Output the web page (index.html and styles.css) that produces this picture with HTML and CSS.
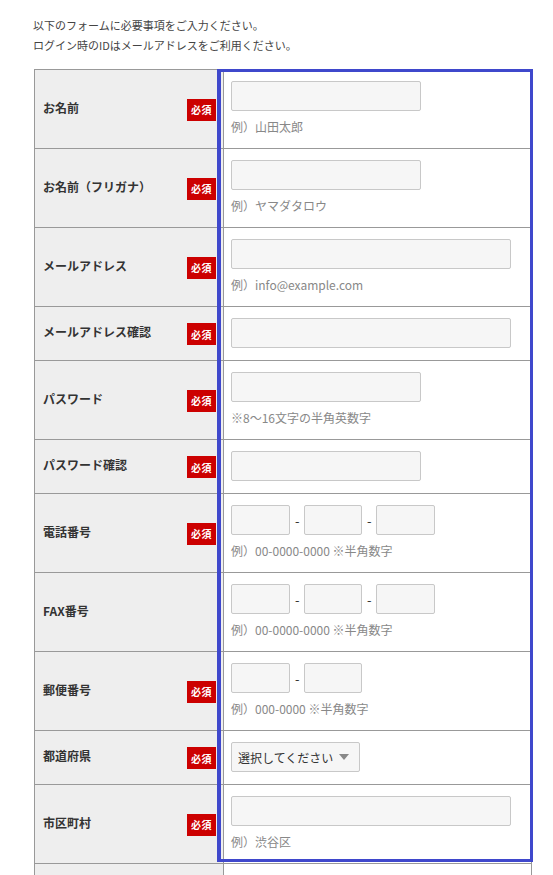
FILE: index.html
```html
<!DOCTYPE html>
<html lang="ja">
<head>
<meta charset="utf-8">
<title>会員登録フォーム</title>
<link rel="stylesheet" href="styles.css">
</head>
<body>
<div class="page">
  <p class="intro">以下のフォームに必要事項をご入力ください。<br>ログイン時のIDはメールアドレスをご利用ください。</p>
  <div class="form-wrap">
    <table class="form-table">
      <colgroup><col class="col-label"><col class="col-field"></colgroup>
      <tbody>
        <tr>
          <th><div class="label"><span class="label-text">お名前</span><span class="req">必須</span></div></th>
          <td><input class="inp w-m" type="text"><p class="note">例）山田太郎</p></td>
        </tr>
        <tr>
          <th><div class="label"><span class="label-text">お名前（フリガナ）</span><span class="req">必須</span></div></th>
          <td><input class="inp w-m" type="text"><p class="note">例）ヤマダタロウ</p></td>
        </tr>
        <tr>
          <th><div class="label"><span class="label-text">メールアドレス</span><span class="req">必須</span></div></th>
          <td><input class="inp w-l" type="text"><p class="note">例）info@example.com</p></td>
        </tr>
        <tr>
          <th><div class="label"><span class="label-text">メールアドレス確認</span><span class="req">必須</span></div></th>
          <td><input class="inp w-l" type="text"></td>
        </tr>
        <tr>
          <th><div class="label"><span class="label-text">パスワード</span><span class="req">必須</span></div></th>
          <td><input class="inp w-m" type="password"><p class="note">※8〜16文字の半角英数字</p></td>
        </tr>
        <tr>
          <th><div class="label"><span class="label-text">パスワード確認</span><span class="req">必須</span></div></th>
          <td><input class="inp w-m" type="password"></td>
        </tr>
        <tr>
          <th><div class="label"><span class="label-text">電話番号</span><span class="req">必須</span></div></th>
          <td><div class="multi"><input class="inp w-s" type="text"><span class="dash">-</span><input class="inp w-s" type="text"><span class="dash">-</span><input class="inp w-s" type="text"></div><p class="note">例）00-0000-0000 ※半角数字</p></td>
        </tr>
        <tr>
          <th><div class="label"><span class="label-text">FAX番号</span></div></th>
          <td><div class="multi"><input class="inp w-s" type="text"><span class="dash">-</span><input class="inp w-s" type="text"><span class="dash">-</span><input class="inp w-s" type="text"></div><p class="note">例）00-0000-0000 ※半角数字</p></td>
        </tr>
        <tr>
          <th><div class="label"><span class="label-text">郵便番号</span><span class="req">必須</span></div></th>
          <td><div class="multi"><input class="inp w-s" type="text"><span class="dash">-</span><input class="inp w-s" type="text"></div><p class="note">例）000-0000 ※半角数字</p></td>
        </tr>
        <tr>
          <th><div class="label"><span class="label-text">都道府県</span><span class="req">必須</span></div></th>
          <td><div class="select"><select class="sel"><option>選択してください</option></select></div></td>
        </tr>
        <tr>
          <th><div class="label"><span class="label-text">市区町村</span><span class="req">必須</span></div></th>
          <td><input class="inp w-l" type="text"><p class="note">例）渋谷区</p></td>
        </tr>
        <tr class="row-next">
          <th></th>
          <td></td>
        </tr>
      </tbody>
    </table>
    <div class="highlight"></div>
  </div>
</div>
</body>
</html>
```
FILE: styles.css
```css
html, body {
  margin: 0;
  padding: 0;
  background: #ffffff;
}
body {
  font-family: "Noto Sans CJK JP", "Noto Sans", sans-serif;
  color: #333333;
  overflow: hidden;
}
.page {
  padding: 15px 0 0 33px;
}
.intro {
  margin: 0 0 14px;
  font-size: 11px;
  line-height: 20px;
  color: #444444;
}
.form-wrap {
  position: relative;
  width: 497px;
  margin-left: 1px;
}
.form-table {
  width: 497px;
  table-layout: fixed;
  border-collapse: collapse;
  border: 1px solid #999999;
}
.col-label { width: 189px; }
.col-field { width: 308px; }
.form-table th,
.form-table td {
  border: 1px solid #999999;
  vertical-align: middle;
  text-align: left;
}
.form-table th {
  background: #eeeeee;
  padding: 0 7px 0 8px;
  font-weight: 700;
  font-size: 12px;
  color: #333333;
}
.form-table td {
  background: #ffffff;
  padding: 11px 8px 12px 7px;
}
.row-next th,
.row-next td {
  height: 40px;
  padding: 0;
}
.label {
  display: flex;
  align-items: center;
  justify-content: space-between;
  min-height: 26px;
}
.label-text {
  margin-bottom: 4px;
}
.req {
  display: inline-flex;
  align-items: center;
  justify-content: center;
  width: 29px;
  height: 22px;
  background: #cc0000;
  color: #ffffff;
  font-size: 10px;
  font-weight: 700;
  letter-spacing: 0.5px;
  margin-top: 1px;
}
.inp {
  display: block;
  box-sizing: border-box;
  height: 30px;
  margin: 0;
  border: 1px solid #c8c8c8;
  border-radius: 2px;
  background: #f6f6f6;
  padding: 0 6px;
  font-family: inherit;
  font-size: 12px;
}
.w-m { width: 190px; }
.w-l { width: 280px; }
.w-s { width: 59px; }
.multi {
  display: flex;
  align-items: center;
  gap: 5px;
}
.multi .inp:nth-child(3) { width: 58px; }
.dash {
  font-size: 13px;
  color: #333333;
  width: 4px;
  text-align: center;
}
.note {
  margin: 6px 0 0;
  font-size: 12px;
  line-height: 19px;
  color: #888888;
}
.select {
  position: relative;
  display: block;
  width: max-content;
}
.sel {
  appearance: none;
  -webkit-appearance: none;
  display: block;
  box-sizing: border-box;
  width: 129px;
  height: 30px;
  margin: 0;
  padding: 0 20px 0 6px;
  border: 1px solid #c8c8c8;
  border-radius: 2px;
  background: #f6f6f6;
  font-family: inherit;
  font-size: 12px;
  color: #333333;
}
.select::after {
  content: "";
  position: absolute;
  right: 11px;
  top: 12px;
  border-left: 5px solid transparent;
  border-right: 5px solid transparent;
  border-top: 6px solid #888888;
  pointer-events: none;
}
.highlight {
  position: absolute;
  left: 183px;
  top: 0;
  width: 316px;
  height: 793px;
  box-sizing: border-box;
  border: 3px solid #3f48cc;
  border-left-width: 4px;
  pointer-events: none;
}
```
